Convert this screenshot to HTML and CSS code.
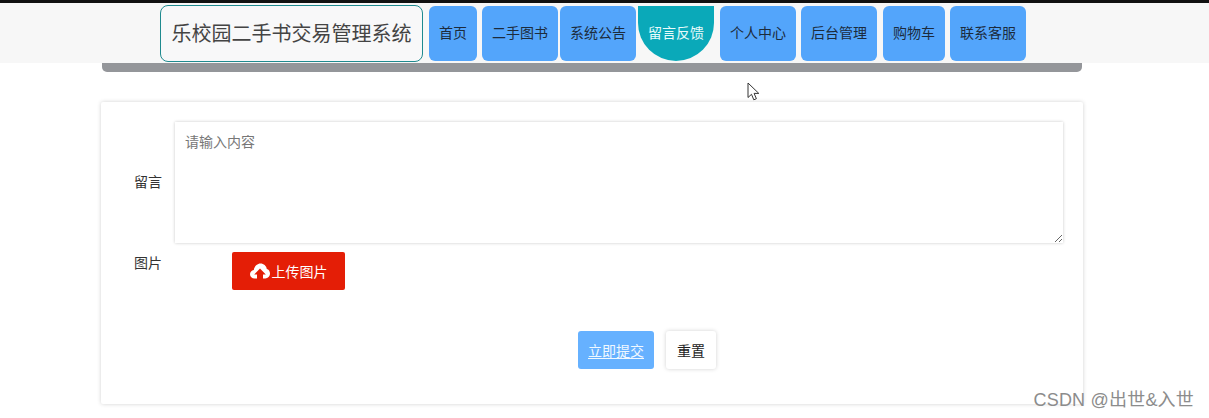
FILE: index.html
```html
<!DOCTYPE html>
<html lang="zh">
<head>
<meta charset="utf-8">
<title>留言反馈</title>
<link rel="stylesheet" href="styles.css">
</head>
<body>
<div class="topline"></div>
<header class="header">
  <div class="brand">乐校园二手书交易管理系统</div>
  <nav class="nav">
    <a class="nav-item w48">首页</a>
    <a class="nav-item w76 tight">二手图书</a>
    <a class="nav-item w76 tight">系统公告</a>
    <a class="nav-item w76 active">留言反馈</a>
    <a class="nav-item w76">个人中心</a>
    <a class="nav-item w76">后台管理</a>
    <a class="nav-item w62">购物车</a>
    <a class="nav-item w76">联系客服</a>
  </nav>
</header>
<div class="strip"></div>
<main class="card">
  <div class="row row-message">
    <label class="label label-mid">留言</label>
    <div class="textarea-wrap">
      <textarea class="textarea" placeholder="请输入内容"></textarea>
    </div>
  </div>
  <div class="row row-image">
    <label class="label label-top">图片</label>
    <button class="upload" type="button">
      <svg class="upload-icon" viewBox="0 0 20 16" width="20" height="16" aria-hidden="true">
        <path fill="#fff" d="M4.6 15.5C2 15.5 0 13.6 0 11.2c0-2.2 1.6-4 3.800-4.300C4.500 3.200 7.300.5 10.500.5c3.200 0 5.900 2.400 6.300 5.500 1.900.5 3.200 2.300 3.200 4.600 0 2.700-2.100 4.900-4.700 4.900H13v-4h2.800L10 5.500 4.200 11.500H7v4z"/>
      </svg>
      <span>上传图片</span>
    </button>
  </div>
  <div class="actions">
    <button class="btn-submit" type="button">立即提交</button>
    <button class="btn-reset" type="button">重置</button>
  </div>
</main>
<svg class="cursor" viewBox="0 0 14 20" width="14" height="20" aria-hidden="true">
  <path fill="#fff" stroke="#333" stroke-width="1" stroke-linejoin="round" d="M1 1v14.500l3.500-3.200 2.300 5.500 2.600-1.100-2.300-5.300h4.700z"/>
</svg>
<div class="watermark">CSDN @出世&amp;入世</div>
</body>
</html>
```
FILE: styles.css
```css
* { box-sizing: border-box; }
html, body { height: 100%; }
body {
  margin: 0;
  overflow: hidden;
  background: #fff;
  color: #222;
  font-family: "Noto Sans CJK SC", "Liberation Sans", sans-serif;
  position: relative;
}
.topline { height: 3px; background: #111; }
.header {
  height: 60px;
  padding: 2px 0 0 160px;
  background: #f7f7f7;
  display: flex;
  align-items: flex-start;
}
.brand {
  width: 263px;
  height: 57px;
  border: 1px solid #1f8a8f;
  border-radius: 8px;
  background: #f8f8f9;
  color: #444;
  font-size: 20px;
  line-height: 53px;
  text-align: center;
  white-space: nowrap;
}
.nav { display: flex; gap: 5px; margin: 1px 0 0 6px; }
.nav-item {
  height: 55px;
  border-radius: 6px;
  background: #53a5fb;
  color: #1c2b3c;
  font-size: 14px;
  line-height: 52px;
  text-align: center;
  white-space: nowrap;
}
.w48 { width: 48px; }
.w62 { width: 62px; margin-left: 1px; }
.w76 { width: 76px; }
.tight { margin-right: -3px; }
.nav-item.active {
  background: #0aa9b9;
  color: #e8fbfb;
  border-radius: 0 0 38px 38px;
  margin-right: 1px;
}
.strip {
  height: 9px;
  margin: 0 127px 0 102px;
  background: #94969a;
  border-radius: 0 0 5px 5px;
}
.card {
  width: 982px;
  height: 302px;
  margin: 30px 0 0 101px;
  padding: 20px 20px 0 0;
  background: #fff;
  box-shadow: 0 0 4px rgba(0, 0, 0, .18);
  border-radius: 2px;
}
.row { display: flex; }
.row-message { align-items: center; }
.label {
  width: 61px;
  flex: none;
  text-align: right;
  font-size: 14px;
  color: #333;
}
.label-mid { padding-bottom: 4px; }
.label-top { line-height: 20px; }
.textarea-wrap { margin-left: 13px; flex: 1; }
.textarea {
  display: block;
  width: 100%;
  height: 121px;
  padding: 9px 10px;
  border: none;
  outline: none;
  resize: vertical;
  background: #fff;
  box-shadow: 0 0 3px rgba(0, 0, 0, .22);
  font: 14px/20px "Noto Sans CJK SC", sans-serif;
  color: #333;
}
.textarea::placeholder { color: #777; opacity: 1; }
.row-image { margin-top: 9px; height: 38px; }
.upload {
  margin-left: 70px;
  width: 113px;
  height: 38px;
  padding: 0;
  border: none;
  border-radius: 2px;
  background: #e41e06;
  color: #fff;
  font: 14px "Noto Sans CJK SC", sans-serif;
  display: flex;
  align-items: center;
  justify-content: center;
  gap: 2px;
}
.upload-icon { flex: none; }
.actions {
  display: flex;
  gap: 12px;
  margin: 41px 0 0 477px;
}
.btn-submit, .btn-reset {
  height: 38px;
  padding: 0;
  border: none;
  border-radius: 3px;
  font: 14px "Noto Sans CJK SC", sans-serif;
}
.btn-submit {
  width: 76px;
  background: #66b1ff;
  color: #f0f8ff;
  text-decoration: underline;
  text-underline-offset: 2px;
}
.btn-reset {
  width: 50px;
  background: #fff;
  color: #222;
  box-shadow: 0 0 4px rgba(0, 0, 0, .18);
}
.cursor { position: absolute; left: 747px; top: 82px; }
.watermark {
  position: absolute;
  right: 15px;
  top: 388px;
  color: #8c8c8c;
  font-size: 18px;
  letter-spacing: .2px;
  line-height: 24px;
  font-family: "Liberation Sans", "Noto Sans CJK SC", sans-serif;
  white-space: nowrap;
}
```
